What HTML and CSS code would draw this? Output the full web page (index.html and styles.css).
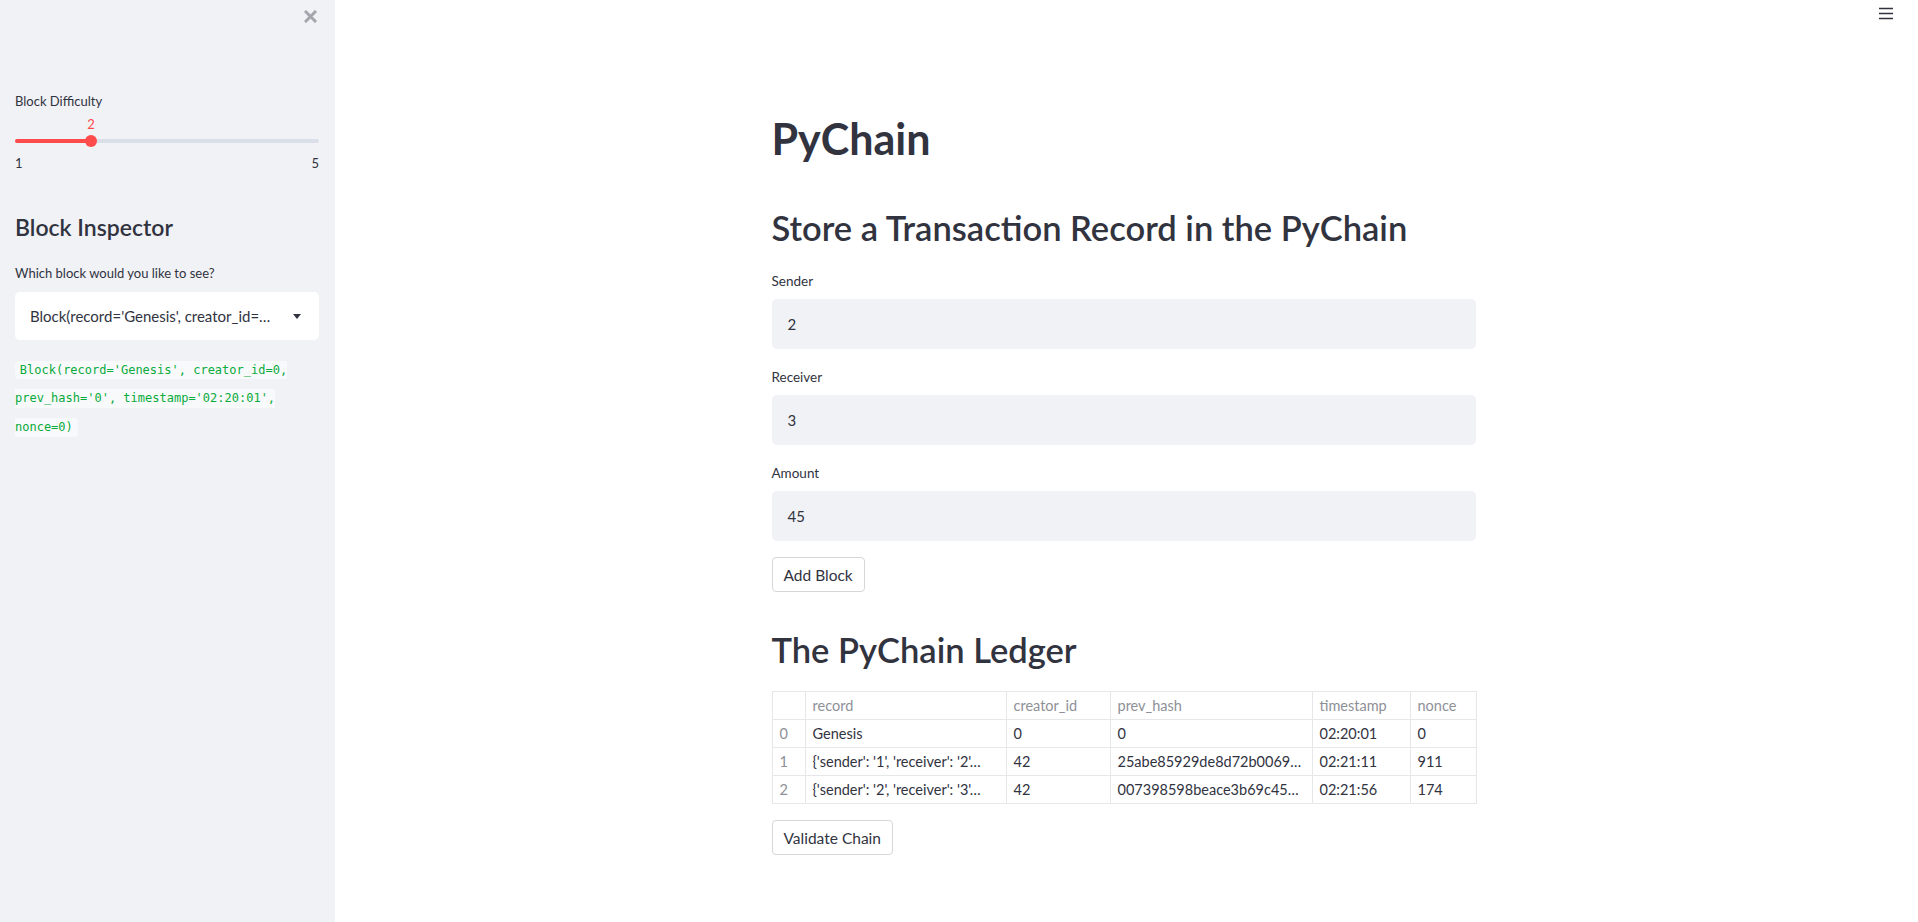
FILE: index.html
```html
<!DOCTYPE html>
<html lang="en">
<head>
<meta charset="utf-8">
<title>PyChain</title>
<link rel="stylesheet" href="styles.css">
</head>
<body>
<div class="app">
  <aside class="sidebar">
    <button class="close-btn" aria-label="Close sidebar">
      <svg width="13" height="13" viewBox="0 0 13 13"><path d="M2 2 L11 11 M11 2 L2 11" stroke="#a4a6ad" stroke-width="3" stroke-linecap="square" fill="none"/></svg>
    </button>
    <div class="sidebar-content">
      <div class="widget-label">Block Difficulty</div>
      <div class="slider">
        <div class="slider-value-row"><span class="slider-value" style="left:25%">2</span></div>
        <div class="slider-track-row">
          <div class="slider-track"><div class="slider-fill" style="width:25%"></div></div>
          <div class="slider-thumb" style="left:25%"></div>
        </div>
        <div class="slider-ticks"><span>1</span><span>5</span></div>
      </div>
      <h2 class="sidebar-h2">Block Inspector</h2>
      <div class="widget-label label-gap">Which block would you like to see?</div>
      <div class="select">
        <span class="select-text">Block(record='Genesis', creator_id=…</span>
        <svg class="select-arrow" width="8" height="5" viewBox="0 0 8 5"><path d="M0 0 L8 0 L4 5 Z" fill="#31333f"/></svg>
      </div>
      <p class="code-p"><code>Block(record='Genesis', creator_id=0, prev_hash='0', timestamp='02:20:01', nonce=0)</code></p>
    </div>
  </aside>
  <main class="main">
    <button class="menu-btn" aria-label="Menu">
      <svg width="14" height="13" viewBox="0 0 14 13"><path d="M0 1.5 H14 M0 6.5 H14 M0 11.5 H14" stroke="#31333f" stroke-width="1.6" fill="none"/></svg>
    </button>
    <div class="block">
      <h1 class="title">PyChain</h1>
      <h2 class="heading">Store a Transaction Record in the PyChain</h2>
      <div class="field">
        <div class="field-label">Sender</div>
        <div class="text-input">2</div>
      </div>
      <div class="field">
        <div class="field-label">Receiver</div>
        <div class="text-input">3</div>
      </div>
      <div class="field">
        <div class="field-label">Amount</div>
        <div class="text-input">45</div>
      </div>
      <div><button class="btn">Add Block</button></div>
      <h2 class="heading">The PyChain Ledger</h2>
      <table class="ledger">
        <colgroup>
          <col class="c-idx"><col class="c-record"><col class="c-creator"><col class="c-hash"><col class="c-ts"><col class="c-nonce">
        </colgroup>
        <thead>
          <tr><th></th><th>record</th><th>creator_id</th><th>prev_hash</th><th>timestamp</th><th>nonce</th></tr>
        </thead>
        <tbody>
          <tr><td class="idx">0</td><td>Genesis</td><td>0</td><td>0</td><td>02:20:01</td><td>0</td></tr>
          <tr><td class="idx">1</td><td>{'sender': '1', 'receiver': '2'…</td><td>42</td><td>25abe85929de8d72b0069…</td><td>02:21:11</td><td>911</td></tr>
          <tr><td class="idx">2</td><td>{'sender': '2', 'receiver': '3'…</td><td>42</td><td>007398598beace3b69c45…</td><td>02:21:56</td><td>174</td></tr>
        </tbody>
      </table>
      <div><button class="btn">Validate Chain</button></div>
    </div>
  </main>
</div>
</body>
</html>
```

FILE: styles.css
```css
* { box-sizing: border-box; }
html, body { margin: 0; padding: 0; }
body {
  font-family: "Lato", "Liberation Sans", sans-serif;
  color: #31333f;
  background: #ffffff;
  width: 1918px;
  height: 922px;
  overflow: hidden;
}
.app {
  display: flex;
  height: 922px;
}

/* Sidebar */
.sidebar {
  position: relative;
  width: 335px;
  flex: 0 0 335px;
  background: #f0f2f6;
  height: 100%;
}
.close-btn {
  position: absolute;
  top: 9px;
  left: 303px;
  width: 14px;
  height: 14px;
  padding: 0;
  border: 0;
  background: transparent;
  display: flex;
  align-items: center;
  justify-content: center;
}
.sidebar-content {
  padding: 89px 16px 0 15px;
  display: flex;
  flex-direction: column;
}
.widget-label {
  font-size: 13px;
  line-height: 24px;
  height: 24px;
  color: #31333f;
}
.label-gap { margin-top: 18px; }
.slider { width: 304px; }
.slider-value-row {
  position: relative;
  height: 22px;
}
.slider-value {
  position: absolute;
  top: 0;
  transform: translateX(-50%);
  font-size: 13px;
  line-height: 22px;
  color: #ff4b4b;
}
.slider-track-row {
  position: relative;
  height: 12px;
  display: flex;
  align-items: center;
}
.slider-track {
  width: 100%;
  height: 4px;
  border-radius: 2px;
  background: #dadfe9;
  overflow: hidden;
}
.slider-fill {
  height: 100%;
  background: #ff4b4b;
}
.slider-thumb {
  position: absolute;
  top: 0;
  width: 12px;
  height: 12px;
  margin-left: -6px;
  border-radius: 50%;
  background: #ff4b4b;
}
.slider-ticks {
  margin-top: 5px;
  display: flex;
  justify-content: space-between;
  font-size: 13px;
  line-height: 22px;
  color: #31333f;
}
.sidebar-h2 {
  margin: 37px 0 0 0;
  font-size: 23px;
  font-weight: 600;
  line-height: 32px;
  color: #31333f;
}
.select {
  margin-top: 7px;
  width: 304px;
  height: 48px;
  background: #ffffff;
  border-radius: 5px;
  display: flex;
  align-items: center;
  justify-content: space-between;
  padding: 0 18px 0 15px;
}
.select-text {
  font-size: 15px;
  white-space: nowrap;
  overflow: hidden;
  color: #31333f;
}
.select-arrow { flex: 0 0 auto; margin-left: 8px; }
.code-p {
  margin: 15px 0 0 0;
  font-size: 16px;
  line-height: 25.6px;
  width: 304px;
}
.code-p code {
  font-family: "DejaVu Sans Mono", "Liberation Mono", monospace;
  font-size: 12px;
  color: #09ab3b;
  background: #f8f9fb;
  padding: 0.2em 0.4em;
  border-radius: 4px;
}

/* Main */
.main {
  position: relative;
  flex: 1;
  padding: 96px 6px 0 0;
}
.menu-btn {
  position: absolute;
  top: 7px;
  right: 25px;
  width: 14px;
  height: 13px;
  padding: 0;
  border: 0;
  background: transparent;
}
.block {
  width: 704px;
  margin: 0 auto;
  display: flex;
  flex-direction: column;
  gap: 16px;
}
.title {
  margin: 0;
  padding: 17px 0 5px 0;
  font-size: 43px;
  font-weight: 700;
  line-height: 52px;
  color: #31333f;
}
.heading {
  margin: 0;
  padding: 21.5px 0 5.5px 0;
  font-size: 34.5px;
  font-weight: 600;
  line-height: 40px;
  color: #31333f;
}
.field { display: flex; flex-direction: column; }
.field-label {
  font-size: 13.5px;
  line-height: 24px;
  height: 24px;
  margin-bottom: 6px;
}
.text-input {
  height: 50px;
  background: #f0f2f6;
  border-radius: 5px;
  padding: 0 16px;
  display: flex;
  align-items: center;
  font-size: 15px;
  color: #31333f;
}
.btn {
  height: 35px;
  padding: 0 11px;
  background: #ffffff;
  border: 1px solid #d5d6d9;
  border-radius: 4px;
  font-family: inherit;
  font-size: 15.5px;
  color: #31333f;
}

/* Table */
.ledger {
  width: 704px;
  table-layout: fixed;
  border-collapse: collapse;
  font-size: 14.5px;
}
.c-idx { width: 33px; }
.c-record { width: 201px; }
.c-creator { width: 104px; }
.c-hash { width: 202px; }
.c-ts { width: 98px; }
.c-nonce { width: 66px; }
.ledger th, .ledger td {
  height: 28px;
  padding: 0 7px;
  border: 1px solid #e6e7e9;
  text-align: left;
  white-space: nowrap;
  overflow: hidden;
  font-weight: 400;
}
.ledger th { color: #8e9097; }
.ledger td { color: #31333f; }
.ledger td.idx { color: #8e9097; }
```
